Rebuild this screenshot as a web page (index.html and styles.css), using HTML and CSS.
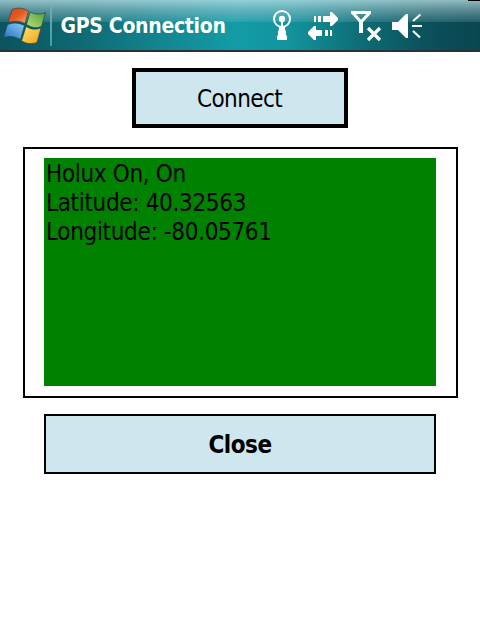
FILE: index.html
```
<!DOCTYPE html>
<html lang="en">
<head>
<meta charset="utf-8">
<title>GPS Connection</title>
<link rel="stylesheet" href="styles.css">
</head>
<body>
<header class="bar">
  <svg class="flag" width="50" height="50" viewBox="0 0 50 50">
    <defs>
      <linearGradient id="r" x1="0" y1="0" x2="1" y2="1"><stop offset="0" stop-color="#d9431c"/><stop offset=".5" stop-color="#e65a22"/><stop offset="1" stop-color="#f9b06a"/></linearGradient>
      <linearGradient id="g" x1="1" y1="0" x2="0" y2="1"><stop offset="0" stop-color="#4f9e35"/><stop offset="1" stop-color="#b9e07a"/></linearGradient>
      <linearGradient id="b" x1="0" y1="1" x2="1" y2="0"><stop offset="0" stop-color="#1f6fc4"/><stop offset="1" stop-color="#8fcbf2"/></linearGradient>
      <linearGradient id="y" x1="1" y1="1" x2="0" y2="0"><stop offset="0" stop-color="#f0a01c"/><stop offset="1" stop-color="#ffe56a"/></linearGradient>
    </defs>
    <g stroke="#17464d" stroke-opacity=".65" stroke-width="1">
      <path fill="url(#r)" d="M12 9.500Q20 6 28.500 11L25 23.500Q17 19.500 8 22.500Z"/>
      <path fill="url(#g)" d="M30 12Q38 16 45.500 12.500L41.500 26.500Q34 29.500 26.500 24.500Z"/>
      <path fill="url(#b)" d="M7.500 24.500Q16 21 24.500 25.500L20.500 39.500Q12 34.500 3.500 37.500Z"/>
      <path fill="url(#y)" d="M26 26.500Q33 31 41 28L37 42.500Q29 45.500 21.500 41Z"/>
    </g>
  </svg>
  <span class="divider"></span>
  <h1 class="title"><span>GPS Connection</span></h1>
  <svg class="status" width="154" height="50" viewBox="270 0 154 50" fill="#fff" stroke="none">
    <circle cx="282" cy="19" r="8" fill="none" stroke="#fff" stroke-width="2"/>
    <circle cx="282" cy="19" r="3.200"/>
    <path d="M281 21h2v5h2v3l1 3v3l1 1v4h-10v-4l1-1v-3l1-3v-3h2z"/>
    <path d="M314 16h2v6h-2zM318 16h3v6h-3zM323 16h7v-4h2l6 6v2l-6 6h-2v-4h-7z"/>
    <path d="M330 30h2v6h-2zM325 30h3v6h-3zM322 30h-6v-4h-2l-6 6v2l6 6h2v-4h6z"/>
    <path fill="none" stroke="#fff" stroke-width="3" d="M351 12.500H371M353 13L360 21H362L369.500 13"/>
    <path d="M359 20h4v13h-4z"/>
    <path fill="none" stroke="#fff" stroke-width="3.200" d="M368 28L380 40M380 28L368 40"/>
    <path d="M392 22h6l8-8h2v24h-2l-8-8h-6z"/>
    <path fill="none" stroke="#fff" stroke-width="2.200" d="M413 21L420.500 14.500M412 26H422M413 31L420 37.500"/>
  </svg>
  <span class="corner"></span>
</header>
<main class="screen">
  <button class="button connect"><span class="label">Connect</span></button>
  <section class="panel">
    <div class="readout">
      <p>Holux On, On</p>
      <p>Latitude: 40.32563</p>
      <p>Longitude: -80.05761</p>
    </div>
  </section>
  <button class="button close"><span class="label">Close</span></button>
</main>
</body>
</html>
```
FILE: styles.css
```
* { box-sizing: border-box; }
body {
  margin: 0;
  height: 640px;
  overflow: hidden;
  background: #fff;
  color: #000;
  font-family: "DejaVu Sans Condensed", "DejaVu Sans", sans-serif;
  font-stretch: condensed;
}
.bar {
  position: relative;
  display: flex;
  height: 52px;
  border-bottom: 2px solid #2b3034;
  background:
    linear-gradient(to bottom, rgba(190,225,232,.75) 0, rgba(170,205,212,.5) 10px, rgba(150,195,205,.18) 22px, transparent 22px),
    linear-gradient(to right, #0c535d 0, #0f6973 80px, #128590 160px, #129ca7 235px, #12939d 290px, #0d6871 370px, #0b505b 430px, #094650 480px);
}
.flag { flex: none; }
.divider {
  flex: none;
  width: 2px;
  height: 40px;
  margin-top: 6px;
  background: linear-gradient(#72adb6, #3aa0aa);
}
.title {
  flex: none;
  width: 218px;
  margin: 0;
  padding-left: 8.500px;
  color: #fff;
  font-size: 21px;
  line-height: 53px;
  font-weight: bold;
  letter-spacing: -.3px;
  white-space: nowrap;
}
.status { flex: none; }
.corner {
  position: absolute;
  top: 0;
  right: 0;
  width: 12px;
  height: 1px;
  background: #000;
}
.screen {
  display: flex;
  flex-direction: column;
  align-items: center;
  padding-top: 16px;
}
.button {
  display: flex;
  align-items: center;
  justify-content: center;
  height: 60px;
  margin: 0;
  padding: 2px 0 0;
  border: 2px solid #000;
  border-radius: 0;
  background: #cee6ed;
  color: #000;
  font: inherit;
  font-size: 24px;
}
.connect {
  width: 216px;
  padding-right: 1px;
  border-width: 4px;
  letter-spacing: -.6px;
}
.panel {
  width: 435px;
  height: 251px;
  margin: 19px 0 16px 1px;
  padding: 9px 20px 10px 19px;
  border: 2px solid #000;
}
.readout {
  height: 228px;
  padding: 2px 2px 0;
  background: #008200;
  font-size: 24px;
  line-height: 29px;
  letter-spacing: -.33px;
}
.readout p { margin: 0; }
.close {
  width: 392px;
  font-weight: bold;
  letter-spacing: -.5px;
}
```
